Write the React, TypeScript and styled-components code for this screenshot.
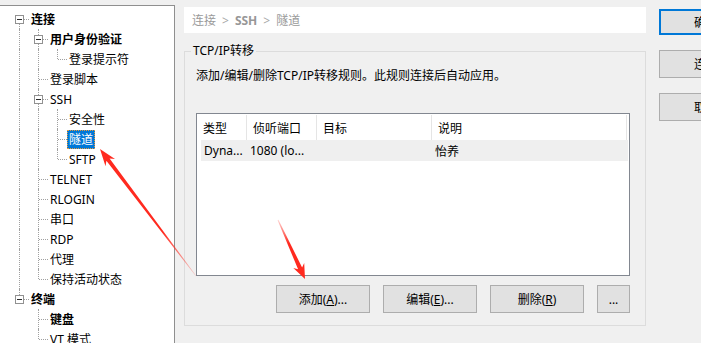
import styled, { createGlobalStyle } from 'styled-components';

type TreeNode = {
  label: string;
  bold?: boolean;
  selected?: boolean;
  children?: TreeNode[];
};

type FlatNode = {
  node: TreeNode;
  level: number;
  guides: boolean[];
  isLast: boolean;
  isFirstRoot: boolean;
};

const tree: TreeNode[] = [
  {
    label: '连接',
    bold: true,
    children: [
      { label: '用户身份验证', bold: true, children: [{ label: '登录提示符' }] },
      { label: '登录脚本' },
      {
        label: 'SSH',
        children: [{ label: '安全性' }, { label: '隧道', selected: true }, { label: 'SFTP' }],
      },
      { label: 'TELNET' },
      { label: 'RLOGIN' },
      { label: '串口' },
      { label: 'RDP' },
      { label: '代理' },
      { label: '保持活动状态' },
    ],
  },
  {
    label: '终端',
    bold: true,
    children: [{ label: '键盘', bold: true }, { label: 'VT 模式' }],
  },
];

// 트리를 한 줄씩 펼치면서 조상 레벨의 세로선이 이어지는지 기록
const flatten = (nodes: TreeNode[], level: number, guides: boolean[], out: FlatNode[]) => {
  nodes.forEach((node, i) => {
    const isLast = i === nodes.length - 1;
    out.push({ node, level, guides, isLast, isFirstRoot: level === 0 && i === 0 });
    if (node.children) flatten(node.children, level + 1, [...guides, !isLast], out);
  });
  return out;
};

const rows = flatten(tree, 0, [], []);

const columns = [
  { title: '类型', width: 50 },
  { title: '侦听端口', width: 70 },
  { title: '目标', width: 115 },
  { title: '说明', width: 195 },
];

const forwardRow = ['Dyna...', '1080 (lo...', '', '怡养'];

const arrowPoints = (
  tx: number,
  ty: number,
  hx: number,
  hy: number,
  headLen: number,
  headHalf: number,
  shaftBase: number,
  shaftTail: number,
) => {
  const dx = hx - tx;
  const dy = hy - ty;
  const len = Math.hypot(dx, dy);
  const ux = dx / len;
  const uy = dy / len;
  const nx = -uy;
  const ny = ux;
  const bx = hx - ux * headLen;
  const by = hy - uy * headLen;
  const nbx = hx - ux * headLen * 0.78;
  const nby = hy - uy * headLen * 0.78;
  const pts = [
    [tx + nx * shaftTail, ty + ny * shaftTail],
    [nbx + nx * shaftBase, nby + ny * shaftBase],
    [bx + nx * headHalf, by + ny * headHalf],
    [hx, hy],
    [bx - nx * headHalf, by - ny * headHalf],
    [nbx - nx * shaftBase, nby - ny * shaftBase],
    [tx - nx * shaftTail, ty - ny * shaftTail],
  ];
  return pts.map((p) => `${p[0].toFixed(1)},${p[1].toFixed(1)}`).join(' ');
};

const App = () => {
  return (
    <>
      <GlobalStyle />
      <Window>
        <TreePanel>
          {rows.map((row, index) => (
            <TreeRow key={index}>
              {row.guides.map((line, g) => (
                <GuideCell key={g} $line={line} />
              ))}
              <NodeCell $top={!row.isFirstRoot} $bottom={!row.isLast}>
                {row.node.children && <ExpandBox />}
              </NodeCell>
              <NodeLabel $bold={row.node.bold} $selected={row.node.selected}>
                {row.node.label}
              </NodeLabel>
            </TreeRow>
          ))}
        </TreePanel>

        <Main>
          <Breadcrumb>
            连接<Sep>&gt;</Sep>
            <strong>SSH</strong>
            <Sep>&gt;</Sep>隧道
          </Breadcrumb>

          <GroupBox>
            <Legend>TCP/IP转移</Legend>
            <Description>添加/编辑/删除TCP/IP转移规则。此规则连接后自动应用。</Description>

            <ListView>
              <HeaderRow>
                {columns.map((col) => (
                  <HeaderCell key={col.title} style={{ width: col.width }}>
                    {col.title}
                  </HeaderCell>
                ))}
              </HeaderRow>
              <DataRow>
                {forwardRow.map((value, i) => (
                  <DataCell key={i} style={{ width: columns[i].width - (i === 0 ? 4 : 0) }}>
                    {value}
                  </DataCell>
                ))}
              </DataRow>
            </ListView>

            <ButtonRow>
              <Button>
                添加(<u>A</u>)...
              </Button>
              <Button>
                编辑(<u>E</u>)...
              </Button>
              <Button>
                删除(<u>R</u>)
              </Button>
              <Button $small>...</Button>
            </ButtonRow>
          </GroupBox>
        </Main>

        <SideButtons>
          <Button $default>确定</Button>
          <Button>连接</Button>
          <Button>取消</Button>
        </SideButtons>
      </Window>

      <Annotations width="701" height="343" viewBox="0 0 701 343">
        <defs>
          <linearGradient id="fade1" gradientUnits="userSpaceOnUse" x1="196" y1="276" x2="100" y2="149">
            <stop offset="0" stopColor="#ff2a1f" stopOpacity="0.15" />
            <stop offset="0.35" stopColor="#ff2a1f" stopOpacity="1" />
          </linearGradient>
          <linearGradient id="fade2" gradientUnits="userSpaceOnUse" x1="278" y1="220" x2="305" y2="279">
            <stop offset="0" stopColor="#ff2a1f" stopOpacity="0.2" />
            <stop offset="0.4" stopColor="#ff2a1f" stopOpacity="1" />
          </linearGradient>
        </defs>
        <polygon points={arrowPoints(196, 276, 100, 149, 17, 6, 2, 0.3)} fill="url(#fade1)" />
        <polygon points={arrowPoints(278, 220, 305, 279, 15, 6, 2.2, 0.4)} fill="url(#fade2)" />
      </Annotations>
    </>
  );
};

export default App;

const GlobalStyle = createGlobalStyle`
  html, body {
    margin: 0;
    padding: 0;
    background: #f0f0f0;
    overflow: hidden;
  }

  body {
    font-family: "Noto Sans", "Noto Sans CJK SC", sans-serif;
    font-size: 12px;
    color: #000;
  }
`;

const Window = styled.div`
  display: flex;
  width: 701px;
  height: 343px;
  overflow: hidden;
  background: #f0f0f0;
`;

const TreePanel = styled.div`
  flex: 0 0 174px;
  margin-top: 5px;
  padding-top: 3px;
  background: #fff;
  border-top: 1px solid #8f8f8f;
  border-right: 1px solid #8f8f8f;
`;

const TreeRow = styled.div`
  display: flex;
  align-items: center;
  height: 20px;
  padding-left: 10px;
  white-space: nowrap;
`;

const GuideCell = styled.div<{ $line: boolean }>`
  position: relative;
  flex: 0 0 19px;
  height: 20px;

  &::before {
    content: '';
    display: ${(props) => (props.$line ? 'block' : 'none')};
    position: absolute;
    left: 9px;
    top: 0;
    height: 20px;
    border-left: 1px dotted #a0a0a0;
  }
`;

const NodeCell = styled.div<{ $top: boolean; $bottom: boolean }>`
  position: relative;
  flex: 0 0 19px;
  height: 20px;

  &::before {
    content: '';
    position: absolute;
    left: 9px;
    top: ${(props) => (props.$top ? '0' : '10px')};
    bottom: ${(props) => (props.$bottom ? '0' : '10px')};
    border-left: 1px dotted #a0a0a0;
  }

  &::after {
    content: '';
    position: absolute;
    left: 10px;
    right: 0;
    top: 10px;
    border-top: 1px dotted #a0a0a0;
  }
`;

const ExpandBox = styled.div`
  position: absolute;
  z-index: 1;
  left: 5px;
  top: 6px;
  width: 7px;
  height: 7px;
  background: #fff;
  border: 1px solid #919191;

  &::after {
    content: '';
    position: absolute;
    left: 1px;
    top: 3px;
    width: 5px;
    height: 1px;
    background: #2b2b2b;
  }
`;

const NodeLabel = styled.span<{ $bold?: boolean; $selected?: boolean }>`
  padding: 0 1px;
  line-height: 17px;
  border: 1px ${(props) => (props.$selected ? 'dotted #e89a3c' : 'solid transparent')};
  font-weight: ${(props) => (props.$bold ? 700 : 400)};
  color: ${(props) => (props.$selected ? '#fff' : '#000')};
  background: ${(props) => (props.$selected ? '#0078d7' : 'transparent')};
`;

const Main = styled.div`
  display: flex;
  flex-direction: column;
  flex: 0 0 462px;
  margin-left: 9px;
`;

const Breadcrumb = styled.div`
  display: flex;
  align-items: center;
  height: 26px;
  margin-top: 7px;
  padding-left: 8px;
  background: #fff;
  color: #9a9a9a;

  strong {
    font-weight: 700;
    color: #979797;
  }
`;

const Sep = styled.span`
  margin: 0 6px;
  color: #a8a8a8;
`;

const GroupBox = styled.fieldset`
  display: flex;
  flex-direction: column;
  margin: 10px 0 0;
  padding: 0 15px 12px 11px;
  border: 1px solid #dcdcdc;
  min-width: 0;
`;

const Legend = styled.legend`
  margin-left: -5px;
  padding: 0 2px;
  line-height: 16px;
`;

const Description = styled.div`
  margin-top: 9px;
  line-height: 16px;
`;

const ListView = styled.div`
  display: flex;
  flex-direction: column;
  height: 160px;
  margin-top: 29px;
  padding-top: 1px;
  background: #fff;
  border: 1px solid #828790;
`;

const HeaderRow = styled.div`
  display: flex;
  height: 25px;
  margin-right: 1px;
`;

const HeaderCell = styled.div`
  display: flex;
  align-items: center;
  padding-left: 6px;
  border-right: 1px solid #e5e5e5;
  box-sizing: border-box;
`;

const DataRow = styled.div`
  display: flex;
  height: 21px;
  margin-left: 4px;
  margin-right: 1px;
  background: #efefef;
`;

const DataCell = styled.div`
  display: flex;
  align-items: center;
  padding-left: 3px;
  box-sizing: border-box;
  overflow: hidden;
  white-space: nowrap;
`;

const ButtonRow = styled.div`
  display: flex;
  justify-content: flex-end;
  gap: 13px;
  margin-top: 9px;
`;

const Button = styled.button<{ $small?: boolean; $default?: boolean }>`
  width: ${(props) => (props.$small ? '33px' : '94px')};
  height: ${(props) => (props.$default ? '26px' : '28px')};
  padding: 0;
  font: inherit;
  color: #000;
  background: #e1e1e1;
  border: ${(props) => (props.$default ? '2px solid #0078d7' : '1px solid #adadad')};
  box-sizing: border-box;
`;

const SideButtons = styled.div`
  display: flex;
  flex-direction: column;
  gap: 15px;
  flex: 0 0 94px;
  margin-left: 13px;
  padding-top: 9px;
`;

const Annotations = styled.svg`
  position: absolute;
  left: 0;
  top: 0;
  pointer-events: none;
`;
